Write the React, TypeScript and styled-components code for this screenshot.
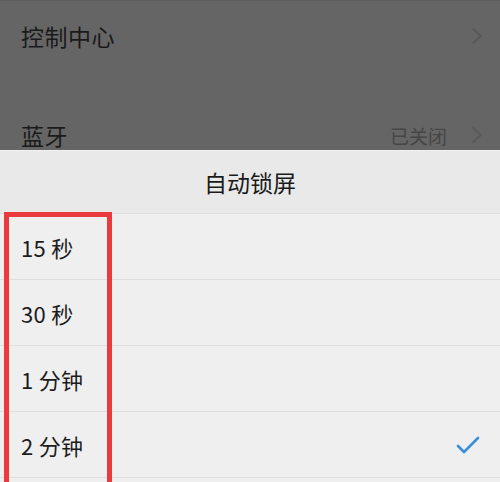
import React, { FC } from "react";
import styled, { createGlobalStyle } from "styled-components";

const GlobalStyle = createGlobalStyle`
  html, body {
    margin: 0;
    padding: 0;
    background: #efefef;
  }
  body {
    font-family: "Noto Sans CJK SC", "Noto Sans", sans-serif;
  }
`;

const Screen = styled.div`
  position: relative;
  width: 500px;
  height: 482px;
  overflow: hidden;
  background: #efefef;
`;

const Dimmed = styled.div`
  height: 150px;
  overflow: hidden;
  background: #656565;
  border-top: 1px solid #5c5c5c;
  box-sizing: border-box;
  display: flex;
  flex-direction: column;
`;

const SettingRow = styled.div<{ $gap?: number }>`
  flex: none;
  height: 70px;
  margin-top: ${(p) => p.$gap ?? 0}px;
  padding: 0 17px 0 21px;
  display: flex;
  align-items: center;
  justify-content: space-between;
`;

const SettingLabel = styled.span`
  font-size: 23px;
  color: #1a1a1a;
  letter-spacing: 0.5px;
`;

const Trailing = styled.div`
  display: flex;
  align-items: center;
  gap: 24px;
`;

const SettingValue = styled.span`
  font-size: 19px;
  color: #464646;
`;

const Sheet = styled.div`
  background: #efefef;
`;

const SheetTitle = styled.div`
  height: 62px;
  display: flex;
  align-items: center;
  justify-content: center;
  background: #e9e9e9;
  border-top: 1px solid #f2f2f2;
  font-size: 23px;
  color: #1a1a1a;
`;

const Option = styled.div`
  height: 65px;
  border-top: 1px solid #dedede;
  padding: 0 20px 0 21px;
  display: flex;
  align-items: center;
  justify-content: space-between;
  &:last-child {
    border-bottom: 1px solid #dedede;
  }
`;

const OptionLabel = styled.span`
  font-size: 22px;
  color: #1c1c1c;
  letter-spacing: 0.3px;
`;

const Highlight = styled.div`
  position: absolute;
  left: 4px;
  top: 212px;
  width: 108px;
  height: 290px;
  border: 5px solid #ea3a3e;
  box-sizing: border-box;
  pointer-events: none;
`;

const Chevron: FC = () => (
  <svg width="12" height="18" viewBox="0 0 12 18">
    <polyline points="2,2 10,9 2,16" fill="none" stroke="#585858" strokeWidth="1.8" strokeLinecap="round" strokeLinejoin="round" />
  </svg>
);

const Check: FC = () => (
  <svg width="24" height="20" viewBox="0 0 24 20">
    <polyline points="2,11 8,17 22,3" fill="none" stroke="#3a8fd9" strokeWidth="2.6" strokeLinecap="round" strokeLinejoin="round" />
  </svg>
);

const options = ["15 秒", "30 秒", "1 分钟", "2 分钟"];
const selected = "2 分钟";

const App: FC = () => (
  <Screen>
    <GlobalStyle />
    <Dimmed>
      <SettingRow>
        <SettingLabel>控制中心</SettingLabel>
        <Chevron />
      </SettingRow>
      <SettingRow $gap={29}>
        <SettingLabel>蓝牙</SettingLabel>
        <Trailing>
          <SettingValue>已关闭</SettingValue>
          <Chevron />
        </Trailing>
      </SettingRow>
    </Dimmed>
    <Sheet>
      <SheetTitle>自动锁屏</SheetTitle>
      {options.map((o) => (
        <Option key={o}>
          <OptionLabel>{o}</OptionLabel>
          {o === selected && <Check />}
        </Option>
      ))}
    </Sheet>
    <Highlight />
  </Screen>
);

export default App;
